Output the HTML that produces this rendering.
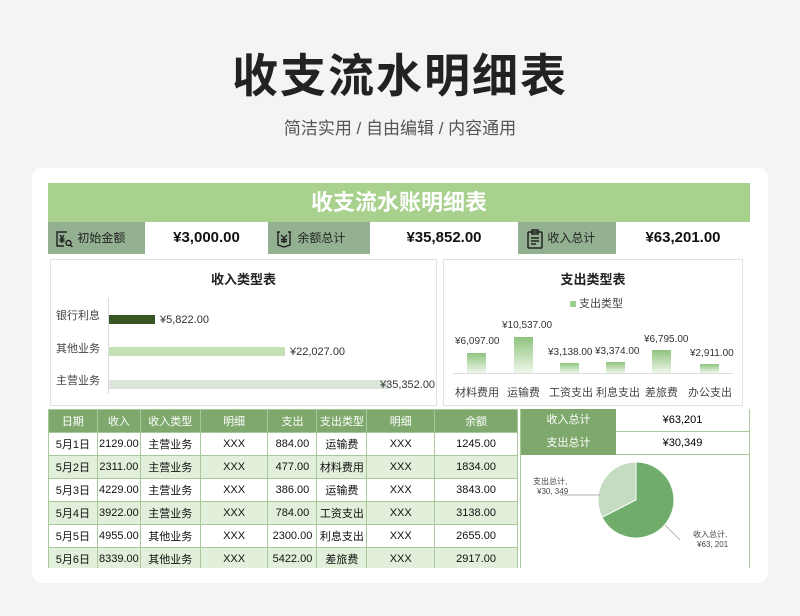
<!DOCTYPE html>
<html><head><meta charset="utf-8"><style>
*{margin:0;padding:0;box-sizing:border-box}
body{width:800px;height:616px;background:#f2f4f6;font-family:"Liberation Sans","Noto Sans CJK SC",sans-serif;position:relative;overflow:hidden}
.a{position:absolute}
.t1{left:0;width:800px;top:40px;text-align:center;font-size:46px;font-weight:bold;color:#222;letter-spacing:2px}
.t2{left:0;width:800px;top:114px;text-align:center;font-size:17px;color:#555}
.card{left:32px;top:168px;width:736px;height:415px;background:#fff;border-radius:10px}
.ban{left:48px;top:183px;width:702px;height:39px;background:#a9d18e;color:#fff;font-size:22px;font-weight:bold;text-align:center;line-height:39px}
.lab{top:222px;height:32px;background:#93b191;font-size:12px;color:#222;line-height:32px}
.val{top:222px;height:32px;font-size:15px;font-weight:bold;color:#111;text-align:center;line-height:32px}
.box{border:1px solid #e2e2e2;background:#fff}
.ct{font-size:13px;font-weight:bold;color:#222;text-align:center}
.sm{font-size:11px;color:#333;white-space:nowrap}
table{border-collapse:collapse;font-size:11px;color:#111}
td{border:1px solid #a9c79a;text-align:center;height:23px;padding:0}
tr.h td{background:#7ea86c;color:#fff}
tr.g td{background:#e2efda}
</style></head><body>
<div class="a t1">收支流水明细表</div>
<div class="a t2">简洁实用 / 自由编辑 / 内容通用</div>
<div class="a card"></div>
<div class="a ban">收支流水账明细表</div>

<div class="a lab" style="left:48px;width:97px;padding-left:6px"><svg width="20" height="20" viewBox="0 0 20 20" style="vertical-align:middle" fill="none" stroke="#222" stroke-width="1.4"><path d="M13 3H3v14h7"/><path d="M6 6l2 3 2-3M8 9v5M5.5 10h5M5.5 12h5"/><circle cx="14.5" cy="14" r="2.5"/><path d="M16.5 16l2 2"/></svg> 初始金额</div>
<div class="a val" style="left:145px;width:123px">¥3,000.00</div>
<div class="a lab" style="left:268px;width:102px;padding-left:6px"><svg width="20" height="20" viewBox="0 0 20 20" style="vertical-align:middle" fill="none" stroke="#222" stroke-width="1.4"><path d="M4 3v13l6 2 6-2V3"/><path d="M6 3H3M17 3h-3M7 6l3 3 3-3M10 9v5M7 10.5h6M7 12.5h6"/></svg> 余额总计</div>
<div class="a val" style="left:370px;width:148px">¥35,852.00</div>
<div class="a lab" style="left:518px;width:98px;padding-left:8px"><svg width="18" height="20" viewBox="0 0 18 20" style="vertical-align:middle" fill="none" stroke="#222" stroke-width="1.5"><rect x="2" y="3" width="14" height="16" rx="1"/><rect x="6" y="1" width="6" height="4"/><path d="M5 9h8M5 12h8M5 15h5"/></svg> 收入总计</div>
<div class="a val" style="left:616px;width:134px">¥63,201.00</div>

<div class="a box" style="left:50px;top:259px;width:387px;height:147px"></div>
<div class="a ct" style="left:50px;width:387px;top:269px">收入类型表</div>
<div class="a" style="left:108px;top:298px;width:1px;height:96px;background:#ddd"></div>
<div class="a sm" style="left:56px;top:307px;color:#444">银行利息</div>
<div class="a sm" style="left:56px;top:340px;color:#444">其他业务</div>
<div class="a sm" style="left:56px;top:372px;color:#444">主营业务</div>
<div class="a" style="left:109px;top:315px;width:46px;height:9px;background:#375623"></div>
<div class="a sm" style="left:160px;top:314px">¥5,822.00</div>
<div class="a" style="left:109px;top:347px;width:176px;height:9px;background:#c5e0b4"></div>
<div class="a sm" style="left:290px;top:346px">¥22,027.00</div>
<div class="a" style="left:109px;top:380px;width:280px;height:9px;background:#dbe5db"></div>
<div class="a sm" style="left:380px;top:379px">¥35,352.00</div>

<div class="a box" style="left:443px;top:259px;width:300px;height:147px"></div>
<div class="a ct" style="left:443px;width:300px;top:269px">支出类型表</div>
<div class="a sm" style="left:570px;top:295px;color:#444"><span style="display:inline-block;width:6px;height:6px;background:#9fcf8f;margin-right:3px;vertical-align:middle"></span>支出类型</div>
<div class="a" style="left:453px;top:373px;width:280px;height:1px;background:#ddd"></div>
<div class="a" style="left:467px;top:353px;width:19px;height:20px;background:linear-gradient(#8fc47e,#eef6ea)"></div>
<div class="a" style="left:514px;top:337px;width:19px;height:36px;background:linear-gradient(#8fc47e,#eef6ea)"></div>
<div class="a" style="left:560px;top:363px;width:19px;height:10px;background:linear-gradient(#8fc47e,#eef6ea)"></div>
<div class="a" style="left:606px;top:362px;width:19px;height:11px;background:linear-gradient(#8fc47e,#eef6ea)"></div>
<div class="a" style="left:652px;top:350px;width:19px;height:23px;background:linear-gradient(#8fc47e,#eef6ea)"></div>
<div class="a" style="left:700px;top:364px;width:19px;height:9px;background:linear-gradient(#8fc47e,#eef6ea)"></div>
<div class="a sm" style="left:455px;top:336px;font-size:10px">¥6,097.00</div>
<div class="a sm" style="left:502px;top:320px;font-size:10px">¥10,537.00</div>
<div class="a sm" style="left:548px;top:347px;font-size:10px">¥3,138.00</div>
<div class="a sm" style="left:595px;top:346px;font-size:10px">¥3,374.00</div>
<div class="a sm" style="left:644px;top:334px;font-size:10px">¥6,795.00</div>
<div class="a sm" style="left:690px;top:348px;font-size:10px">¥2,911.00</div>
<div class="a sm" style="left:455px;top:384px;color:#444">材料费用</div>
<div class="a sm" style="left:507px;top:384px;color:#444">运输费</div>
<div class="a sm" style="left:549px;top:384px;color:#444">工资支出</div>
<div class="a sm" style="left:596px;top:384px;color:#444">利息支出</div>
<div class="a sm" style="left:645px;top:384px;color:#444">差旅费</div>
<div class="a sm" style="left:688px;top:384px;color:#444">办公支出</div>

<div class="a" style="left:48px;top:409px;width:470px;height:159px;overflow:hidden">
<table style="width:470px">
<colgroup><col style="width:49px"><col style="width:43px"><col style="width:60px"><col style="width:68px"><col style="width:49px"><col style="width:50px"><col style="width:68px"><col style="width:83px"></colgroup>
<tr class="h"><td>日期</td><td>收入</td><td>收入类型</td><td>明细</td><td>支出</td><td>支出类型</td><td>明细</td><td>余额</td></tr>
<tr><td>5月1日</td><td>2129.00</td><td>主营业务</td><td>XXX</td><td>884.00</td><td>运输费</td><td>XXX</td><td>1245.00</td></tr>
<tr class="g"><td>5月2日</td><td>2311.00</td><td>主营业务</td><td>XXX</td><td>477.00</td><td>材料费用</td><td>XXX</td><td>1834.00</td></tr>
<tr><td>5月3日</td><td>4229.00</td><td>主营业务</td><td>XXX</td><td>386.00</td><td>运输费</td><td>XXX</td><td>3843.00</td></tr>
<tr class="g"><td>5月4日</td><td>3922.00</td><td>主营业务</td><td>XXX</td><td>784.00</td><td>工资支出</td><td>XXX</td><td>3138.00</td></tr>
<tr><td>5月5日</td><td>4955.00</td><td>其他业务</td><td>XXX</td><td>2300.00</td><td>利息支出</td><td>XXX</td><td>2655.00</td></tr>
<tr class="g"><td>5月6日</td><td>8339.00</td><td>其他业务</td><td>XXX</td><td>5422.00</td><td>差旅费</td><td>XXX</td><td>2917.00</td></tr>
</table></div>

<div class="a" style="left:520px;top:409px;width:230px;height:159px;border-left:1px solid #a9c79a;border-right:1px solid #a9c79a"></div>
<div class="a" style="left:521px;top:409px;width:95px;height:23px;background:#7ea86c;color:#fff;font-size:11px;text-align:center;line-height:23px">收入总计</div>
<div class="a" style="left:616px;top:409px;width:133px;height:23px;font-size:11px;text-align:center;line-height:23px;border-bottom:1px solid #a9c79a">¥63,201</div>
<div class="a" style="left:521px;top:432px;width:95px;height:23px;background:#7ea86c;color:#fff;font-size:11px;text-align:center;line-height:23px">支出总计</div>
<div class="a" style="left:616px;top:432px;width:133px;height:23px;font-size:11px;text-align:center;line-height:23px;border-bottom:1px solid #a9c79a">¥30,349</div>
<svg class="a" style="left:520px;top:455px" width="230" height="113">
<g transform="translate(-520,-455)">
<path d="M636,500 L636,462 A38,38 0 0 0 602.1,517.3 Z" fill="#c5dcc0" stroke="#fff" stroke-width="1"/>
<path d="M636,500 L636,462 A38,38 0 1 1 602.1,517.3 Z" fill="#70ad6a" stroke="#fff" stroke-width="1"/>
<path d="M560,495 H600" stroke="#999" stroke-width="0.7"/>
<path d="M665,525 L680,540" stroke="#999" stroke-width="0.7"/>
<text x="533" y="484" font-size="8" fill="#444" font-family="Liberation Sans,Noto Sans CJK SC,sans-serif">支出总计,</text>
<text x="537" y="494" font-size="8" fill="#444" font-family="Liberation Sans,Noto Sans CJK SC,sans-serif">¥30, 349</text>
<text x="693" y="537" font-size="8" fill="#444" font-family="Liberation Sans,Noto Sans CJK SC,sans-serif">收入总计,</text>
<text x="697" y="547" font-size="8" fill="#444" font-family="Liberation Sans,Noto Sans CJK SC,sans-serif">¥63, 201</text>
</g></svg>
</body></html>
